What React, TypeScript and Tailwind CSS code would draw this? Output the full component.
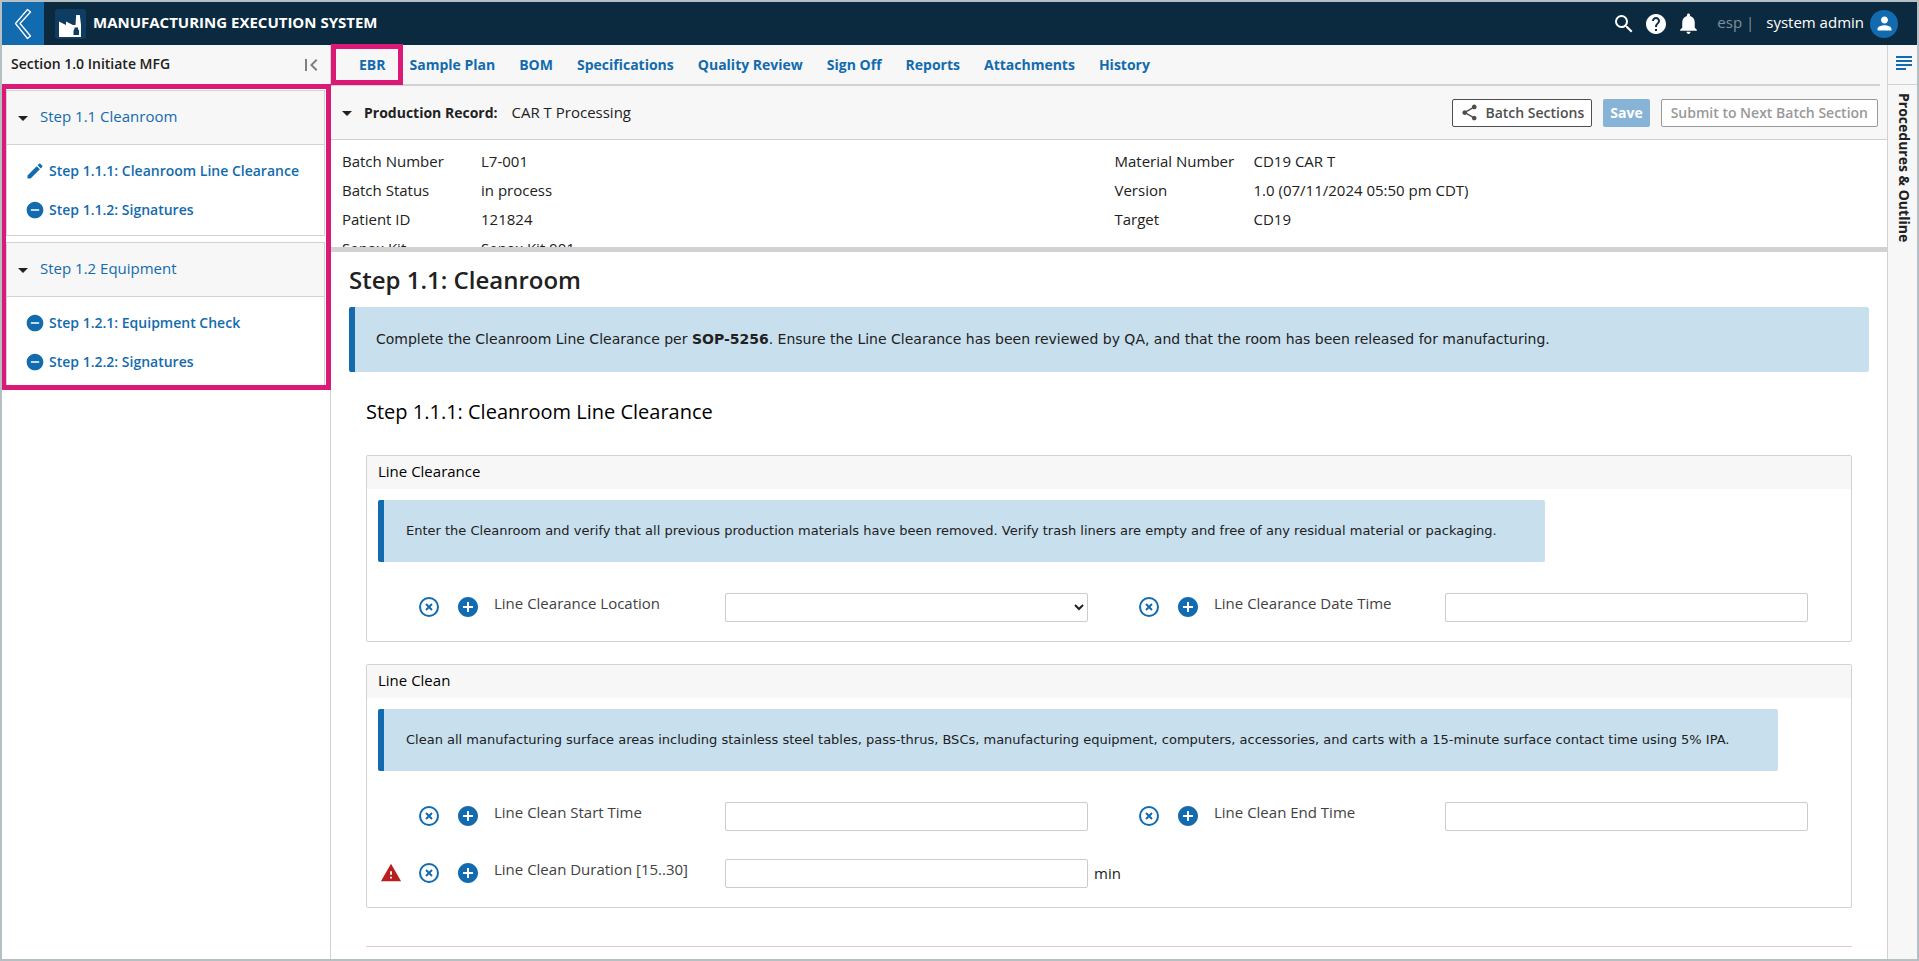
import type { ReactNode } from 'react';
import {
  MdAddCircle,
  MdArrowDropDown,
  MdEdit,
  MdFirstPage,
  MdHelp,
  MdNotifications,
  MdPerson,
  MdRemoveCircle,
  MdSearch,
  MdShare,
  MdWarning,
} from 'react-icons/md';

const tabs = [
  'Sample Plan',
  'BOM',
  'Specifications',
  'Quality Review',
  'Sign Off',
  'Reports',
  'Attachments',
  'History',
];

const sections = [
  {
    title: 'Step 1.1 Cleanroom',
    steps: [
      { label: 'Step 1.1.1: Cleanroom Line Clearance', editing: true },
      { label: 'Step 1.1.2: Signatures', editing: false },
    ],
  },
  {
    title: 'Step 1.2 Equipment',
    steps: [
      { label: 'Step 1.2.1: Equipment Check', editing: false },
      { label: 'Step 1.2.2: Signatures', editing: false },
    ],
  },
];

const batchInfo = [
  ['Batch Number', 'L7-001'],
  ['Batch Status', 'in process'],
  ['Patient ID', '121824'],
  ['Sepax Kit', 'Sepax Kit 001'],
];

const materialInfo = [
  ['Material Number', 'CD19 CAR T'],
  ['Version', '1.0 (07/11/2024 05:50 pm CDT)'],
  ['Target', 'CD19'],
];

function FactoryLogo() {
  return (
    <svg viewBox="0 0 31 30" className="w-[31px] h-[30px]" aria-hidden="true">
      <rect width="31" height="30" rx="3" fill="#0f3d61" />
      <path d="M4 28V12.500l7 3.500v-3.500l7 3.500h2.500l.7-10h3.600l1.200 10v12z" fill="#fff" />
      <path d="M19.500 18.500h3.500v1.500l1 1.500V26h-5.500v-4.500l1-1.500z" fill="#0f3d61" />
    </svg>
  );
}

function Header() {
  return (
    <header className="flex h-[43px] shrink-0 items-center bg-[#0b2a40] text-white">
      <button aria-label="Back" className="flex h-full w-[42px] items-center justify-center bg-[#126bae]">
        <svg viewBox="0 0 18 32" className="w-[18px] h-8" aria-hidden="true">
          <path
            d="M13.500 1.500 1.500 15.500 13.500 30.500 16.500 28 6 15.500 16.500 4z"
            fill="none"
            stroke="#fff"
            strokeWidth="1.300"
            strokeLinejoin="round"
          />
        </svg>
      </button>
      <div className="ml-[11px]">
        <FactoryLogo />
      </div>
      <h1 className="ml-[7px] pb-0.5 text-[15px] font-bold">MANUFACTURING EXECUTION SYSTEM</h1>
      <div className="ml-auto flex items-center">
        <button aria-label="Search" className="mr-2">
          <MdSearch size={24} />
        </button>
        <button aria-label="Help" className="mr-2">
          <MdHelp size={24} />
        </button>
        <button aria-label="Notifications" className="mr-4">
          <MdNotifications size={25} />
        </button>
        <span className="mr-3 pb-0.5 text-[15px] text-[#7f909c]">esp |</span>
        <span className="mr-1.5 pb-0.5 text-[15px] font-medium">system admin</span>
        <button
          aria-label="Account"
          className="mr-[19px] flex h-7 w-7 items-center justify-center rounded-full bg-[#126bae]"
        >
          <MdPerson size={21} />
        </button>
      </div>
    </header>
  );
}

function Sidebar() {
  return (
    <aside className="relative w-[329px] shrink-0 border-r border-[#d2d2d2]">
      <div className="flex h-[39px] items-center bg-[#f7f7f7] pl-[9px] pr-[7px]">
        <span className="pb-0.5 text-[14px] font-semibold">Section 1.0 Initiate MFG</span>
        <button aria-label="Collapse panel" className="ml-auto text-[#808080]">
          <MdFirstPage size={24} />
        </button>
      </div>
      <nav className="relative h-[306px] overflow-hidden pl-1 pr-[5px] pt-1.5">
        {sections.map((section) => (
          <div key={section.title} className="mb-1.5 border border-[#d2d2d2] bg-white">
            <button className="flex h-[54px] w-full items-center border-b border-[#d2d2d2] bg-[#f7f7f7] pl-1 text-[#126bae]">
              <MdArrowDropDown size={24} className="mr-[5px] text-[#212121]" />
              <span className="pb-0.5 text-[15px]">{section.title}</span>
            </button>
            <ul className="py-1.5">
              {section.steps.map((step) => (
                <li key={step.label}>
                  <a href="#" className="flex h-[39px] items-center pl-[18px] text-[#126bae]">
                    {step.editing ? <MdEdit size={20} /> : <MdRemoveCircle size={20} />}
                    <span className="ml-1 text-[14px] font-semibold">{step.label}</span>
                  </a>
                </li>
              ))}
            </ul>
          </div>
        ))}
      </nav>
      <div className="pointer-events-none absolute -left-px top-[39px] h-[306px] w-[330px] border-[5px] border-[#db1a77]" />
    </aside>
  );
}

function TabBar() {
  return (
    <div className="bg-[#f7f7f7] pr-[7px]">
      <nav className="relative flex h-[41px] items-center border-b-2 border-[#d2d2d2] text-[14px] font-bold text-[#126bae]">
        <a href="#" className="pl-7">
          EBR
        </a>
        <div className="pointer-events-none absolute left-0 -top-px h-[41px] w-[72px] border-[5px] border-[#db1a77]" />
        {tabs.map((tab) => (
          <a href="#" key={tab} className="ml-6">
            {tab}
          </a>
        ))}
      </nav>
    </div>
  );
}

function InfoColumn({ rows }: { rows: string[][] }) {
  return (
    <dl className="flex-1">
      {rows.map(([label, value]) => (
        <div key={label} className="flex h-[29px] items-center">
          <dt className="w-[139px]">{label}</dt>
          <dd>{value}</dd>
        </div>
      ))}
    </dl>
  );
}

function RecordHeader() {
  return (
    <section>
      <div className="flex h-[54px] items-center border-b border-[#d2d2d2] bg-[#f7f7f7] pl-1 pr-[9px]">
        <button aria-label="Toggle record details" className="mr-[5px]">
          <MdArrowDropDown size={24} />
        </button>
        <span className="mr-3.5 text-[14px] font-bold">Production Record:</span>
        <span className="text-[15px] font-medium">CAR T Processing</span>
        <div className="ml-auto flex gap-[11px] text-[14px] font-semibold">
          <button className="flex h-7 items-center rounded-xs border border-[#4f4f4f] bg-white px-[7px] text-[#4f4f4f]">
            <MdShare size={19} className="mr-1.5" />
            Batch Sections
          </button>
          <button className="h-7 rounded-xs bg-[#87b4d6] px-[7px] font-bold text-white">Save</button>
          <button className="h-7 rounded-xs border border-[#999999] bg-white px-[9px] text-[#999999]">
            Submit to Next Batch Section
          </button>
        </div>
      </div>
      <div className="flex h-[112px] overflow-hidden border-b-[5px] border-[#d2d2d2] pl-[11px] pt-[7px] text-[15px]">
        <InfoColumn rows={batchInfo} />
        <InfoColumn rows={materialInfo} />
      </div>
    </section>
  );
}

function Note({ children, className }: { children: ReactNode; className: string }) {
  return (
    <div
      className={`flex items-center rounded-xs border-l-[6px] border-[#126bae] bg-[#c8dfee] font-[Verdana,'DejaVu_Sans',sans-serif] text-[#212121] ${className}`}
    >
      <p>{children}</p>
    </div>
  );
}

function ClearIcon() {
  return (
    <svg viewBox="0 0 20 20" className="h-5 w-5" fill="none" stroke="currentColor" strokeWidth="2" aria-hidden="true">
      <circle cx="10" cy="10" r="9" />
      <path d="m7 7 6 6M13 7l-6 6" />
    </svg>
  );
}

interface FieldProps {
  id: string;
  label: string;
  type?: 'text' | 'select';
  unit?: string;
  warning?: boolean;
}

function Field({ id, label, type = 'text', unit, warning }: FieldProps) {
  return (
    <div className="flex h-7 items-center">
      <span className="flex w-[41px] shrink-0 pl-0.5 text-[#b81f1f]">{warning && <MdWarning size={22} />}</span>
      <button aria-label={`Clear ${label}`} className="mr-[17px] shrink-0 text-[#126bae]">
        <ClearIcon />
      </button>
      <button aria-label={`Add to ${label}`} className="mr-3.5 shrink-0 text-[#126bae]">
        <MdAddCircle size={24} />
      </button>
      <label htmlFor={id} className="w-[231px] shrink-0 self-start text-[15px] leading-5 text-[#424242]">
        {label}
      </label>
      {type === 'select' ? (
        <select id={id} className="h-[29px] min-w-0 flex-1 rounded-xs border border-[#cccccc] bg-white" />
      ) : (
        <input id={id} type="text" className="h-[29px] min-w-0 flex-1 rounded-xs border border-[#cccccc] bg-white px-2" />
      )}
      <span className="w-2.5 shrink-0 whitespace-nowrap pl-1.5 text-[15px]">{unit}</span>
    </div>
  );
}

function Panel({ title, note, children }: { title: string; note: string; children: ReactNode }) {
  return (
    <section className="rounded-xs border border-[#d2d2d2] pb-5">
      <h4 className="flex h-[33px] items-center bg-[#f7f7f7] pb-0.5 pl-[11px] text-[15px] text-black">{title}</h4>
      <div className="pl-[11px] pr-[33px] pt-[11px]">
        <Note className="h-[62px] w-fit pl-[22px] pr-12 text-[13px]">{note}</Note>
        <div className="mt-[31px] grid grid-cols-2 gap-y-[29px]">{children}</div>
      </div>
    </section>
  );
}

function SideRail() {
  return (
    <aside className="w-[30px] shrink-0 border-l border-[#d2d2d2] bg-[#f7f7f7]">
      <button
        aria-label="Open outline"
        className="flex h-10 w-full items-center justify-center border-b border-[#d2d2d2] pb-1 pl-0.5 text-[#126bae]"
      >
        <svg viewBox="0 0 16 14" className="h-3.5 w-4" fill="currentColor" aria-hidden="true">
          <path d="M0 0h16v2H0zM0 4h16v2H0zM0 8h16v2H0zM0 12h10v2H0z" />
        </svg>
      </button>
      <span className="mt-2 block pl-1 text-[14px] leading-6 font-bold [writing-mode:vertical-rl]">
        Procedures &amp; Outline
      </span>
    </aside>
  );
}

export default function App() {
  return (
    <div className="flex h-screen flex-col overflow-hidden border-2 border-[#b4c0c4] bg-white font-['Open_Sans',sans-serif] text-[#212121]">
      <Header />
      <div className="flex min-h-0 flex-1">
        <Sidebar />
        <main className="min-w-0 flex-1">
          <TabBar />
          <RecordHeader />
          <div className="px-[18px] pt-2.5">
            <h2 className="text-[24px] leading-9 font-semibold">Step 1.1: Cleanroom</h2>
            <Note className="mt-[9px] h-[65px] pl-[21px] text-[14px]">
              Complete the Cleanroom Line Clearance per <strong>SOP-5256</strong>. Ensure the Line Clearance has been
              reviewed by QA, and that the room has been released for manufacturing.
            </Note>
            <div className="px-[17px]">
              <h3 className="mb-7 mt-[25px] text-[20px] leading-[30px] text-black">
                Step 1.1.1: Cleanroom Line Clearance
              </h3>
              <div className="flex flex-col gap-[22px]">
                <Panel
                  title="Line Clearance"
                  note="Enter the Cleanroom and verify that all previous production materials have been removed. Verify trash liners are empty and free of any residual material or packaging."
                >
                  <Field id="location" label="Line Clearance Location" type="select" />
                  <Field id="date-time" label="Line Clearance Date Time" />
                </Panel>
                <Panel
                  title="Line Clean"
                  note="Clean all manufacturing surface areas including stainless steel tables, pass-thrus, BSCs, manufacturing equipment, computers, accessories, and carts with a 15-minute surface contact time using 5% IPA."
                >
                  <Field id="start-time" label="Line Clean Start Time" />
                  <Field id="end-time" label="Line Clean End Time" />
                  <Field id="duration" label="Line Clean Duration [15..30]" unit="min" warning />
                </Panel>
              </div>
              <hr className="mt-[38px] border-[#d2d2d2]" />
            </div>
          </div>
        </main>
        <SideRail />
      </div>
    </div>
  );
}
